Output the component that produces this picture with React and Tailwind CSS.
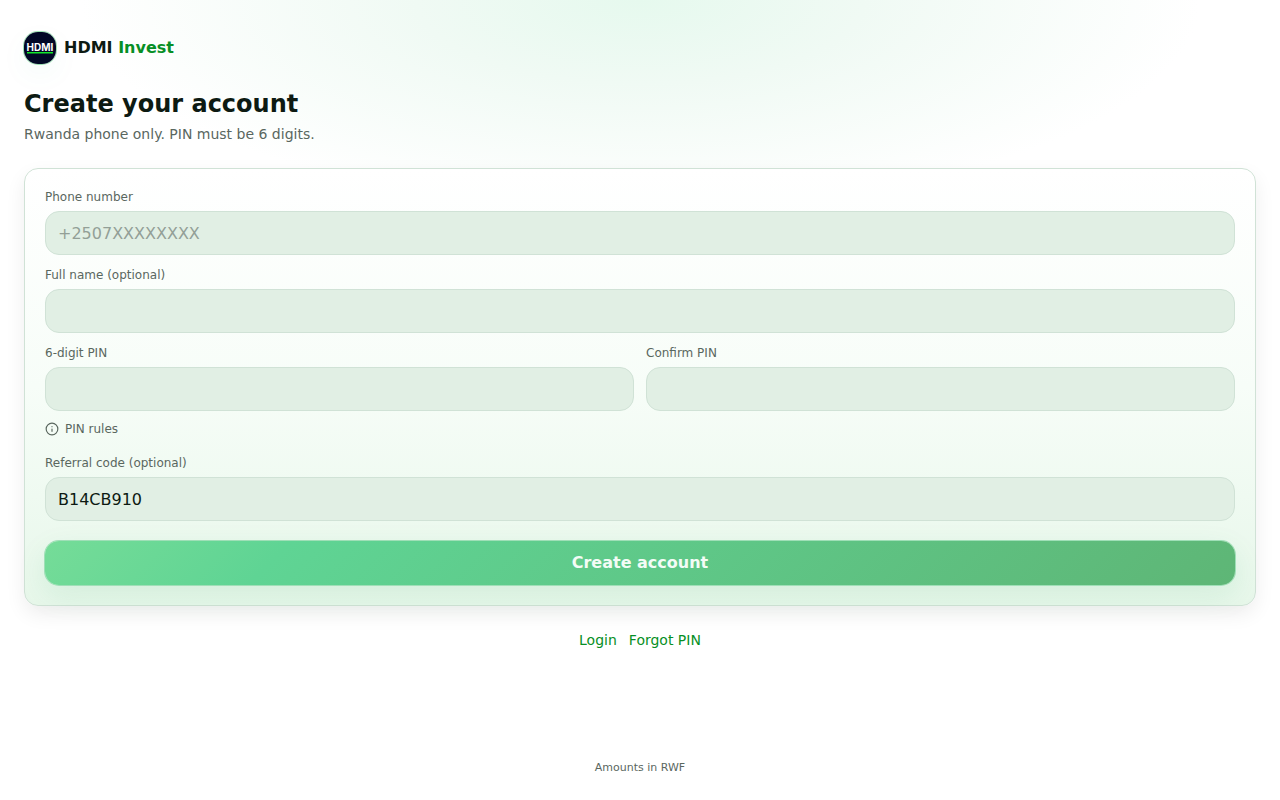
import React, { useState } from 'react'
import { Info } from 'lucide-react'

const Logo = () => (
    <svg viewBox="0 0 32 32" className="size-8 shrink-0 rounded-[14px] shadow-[0_0_0_1px_rgba(94,205,130,0.6),0_10px_30px_rgba(16,185,129,0.05)]" aria-hidden="true">
        <rect width="32" height="32" fill="#020826" />
        <text x="16" y="19" textAnchor="middle" fontFamily="Inter, sans-serif" fontWeight="700" fontSize="10" fill="#fff">HDMI</text>
        <rect x="3" y="20" width="26" height="1.5" fill="#12e62a" />
    </svg>
)

const Field = ({ id, label, ...props }) => (
    <div className="flex flex-col gap-1.5">
        <label htmlFor={id} className="text-xs text-[#5a675f]">{label}</label>
        <input
            id={id}
            className="h-11 w-full rounded-[14px] border border-[#d0e2d6] bg-[#e1efe4] px-3 text-base text-[#0d1a12] placeholder:text-[#939f97] outline-none focus:border-[#5fcf8f]"
            {...props}
        />
    </div>
)

const App = () => {
    const [form, setForm] = useState({
        phone: '',
        name: '',
        pin: '',
        confirm: '',
        referral: 'B14CB910'
    })

    const handleChange = (e) => {
        setForm({ ...form, [e.target.name]: e.target.value })
    }

    return (
        <div className="flex min-h-screen flex-col bg-white bg-[radial-gradient(560px_210px_at_50%_0%,#e6f9ee_0%,#f0faf4_40%,#ffffff_100%)] px-6 pt-8 pb-6 font-['DejaVu_Sans',sans-serif]">
            <header className="flex items-center gap-2">
                <Logo />
                <span className="text-base font-bold text-[#0d1a12]">
                    HDMI <span className="text-[#078f25]">Invest</span>
                </span>
            </header>

            <main className="mt-6 flex-1">
                <h1 className="text-2xl font-bold text-[#0d1a12]">Create your account</h1>
                <p className="mt-1 text-sm text-[#5a675f]">Rwanda phone only. PIN must be 6 digits.</p>

                <form
                    onSubmit={(e) => e.preventDefault()}
                    className="mt-6 flex flex-col gap-3 rounded-[14px] border border-[#d0e2d6] bg-linear-to-b from-white via-[#f7fdf8] to-[#e7f7ea] p-5 shadow-[0_8px_20px_rgba(0,0,0,0.07)]"
                >
                    <Field id="phone" name="phone" label="Phone number" type="tel" placeholder="+2507XXXXXXXX" value={form.phone} onChange={handleChange} />
                    <Field id="name" name="name" label="Full name (optional)" type="text" value={form.name} onChange={handleChange} />

                    <div>
                        <div className="grid grid-cols-2 gap-3">
                            <Field id="pin" name="pin" label="6-digit PIN" type="password" maxLength={6} value={form.pin} onChange={handleChange} />
                            <Field id="confirm" name="confirm" label="Confirm PIN" type="password" maxLength={6} value={form.confirm} onChange={handleChange} />
                        </div>
                        <button type="button" className="mt-2 mb-1 flex h-5 items-center gap-1.5 text-xs text-[#5a675f]">
                            <Info size={14} />
                            PIN rules
                        </button>
                    </div>

                    <Field id="referral" name="referral" label="Referral code (optional)" type="text" value={form.referral} onChange={handleChange} />

                    <button
                        type="submit"
                        className="mt-2 h-11 w-full rounded-[14px] bg-[linear-gradient(135deg,#75dc98_0%,#5fd494_20%,#5eb676_100%)] text-base font-bold text-[#f3fcf6] shadow-[0_0_0_1px_#9fdfb7,0_10px_30px_rgba(16,160,80,0.1)]"
                    >
                        Create account
                    </button>
                </form>

                <nav className="mt-6 flex justify-center gap-3 text-sm text-[#078f25]">
                    <a href="#login">Login</a>
                    <a href="#forgot">Forgot PIN</a>
                </nav>
            </main>

            <footer className="text-center text-[11px] leading-4 text-[#5a675f]">Amounts in RWF</footer>
        </div>
    )
}

export default App
